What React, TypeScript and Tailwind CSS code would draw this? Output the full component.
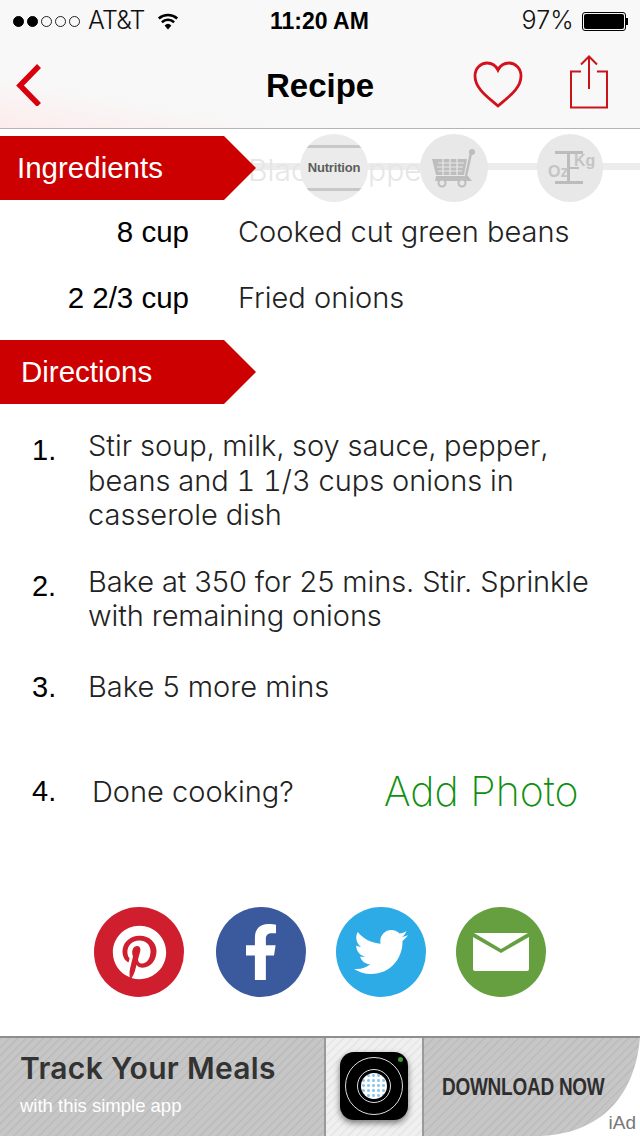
import React from 'react';
import { FaPinterest, FaFacebookF, FaTwitter } from 'react-icons/fa';

const Dot = ({ on }: { on: boolean }) => (
  <span className={on ? 'w-[11px] h-[11px] rounded-full bg-black border border-black' : 'w-[11px] h-[11px] rounded-full border border-[#222]'} />
);

const StatusBar = () => (
  <div className="h-[42px] flex items-center justify-between pl-[13px] pr-[12px] relative">
    <div className="flex items-center">
      <div className="flex gap-[3px] mr-[8px]">
        <Dot on /><Dot on /><Dot on={false} /><Dot on={false} /><Dot on={false} />
      </div>
      <span className="text-[25px] font-light text-[#111] tracking-[-0.8px]">AT&amp;T</span>
      <svg width="24" height="18" viewBox="0 0 24 18" className="ml-[11px]">
        <path d="M12 17.5 8.6 13.4a5 5 0 0 1 6.8 0Z" fill="#000" />
        <path d="M5.9 10.2a9 9 0 0 1 12.2 0M2.8 6.4a14 14 0 0 1 18.4 0" stroke="#000" strokeWidth="2.6" fill="none" />
      </svg>
    </div>
    <span className="absolute left-[270px] text-[23px] font-semibold text-black font-['Liberation_Sans',Arial,sans-serif]">11:20 AM</span>
    <div className="flex items-center">
      <span className="text-[25px] font-light text-[#111] mr-[8px] tracking-[0.2px]">97%</span>
      <div className="w-[44px] h-[19px] rounded-[3px] border border-black p-[1px]">
        <div className="w-full h-full rounded-[2px] bg-black" />
      </div>
      <div className="w-[2px] h-[7px] bg-black" />
    </div>
  </div>
);

const NavBar = () => (
  <div className="h-[86px] flex items-center justify-between pl-[14px] pr-[31px] relative">
    <svg width="30" height="42" viewBox="0 0 30 42">
      <path d="M25 2 6 21.500 25 41" stroke="#d9000d" strokeWidth="5.500" fill="none" />
    </svg>
    <span className="absolute left-[266px] text-[33px] font-semibold text-black leading-none font-['Liberation_Sans',Arial,sans-serif]">Recipe</span>
    <div className="flex items-center gap-[46px]">
      <svg width="50" height="48" viewBox="0 0 50 48">
        <path d="M25 45C16 37 2 28 2 15 2 7 8 2 14 2c5 0 9 3 11 7 2-4 6-7 11-7 6 0 12 5 12 13 0 13-14 22-23 30Z" stroke="#d2111c" strokeWidth="2.8" fill="none" />
      </svg>
      <svg width="40" height="54" viewBox="0 0 40 54" className="mt-[-6px]">
        <path d="M12 16.500H2V52.500H38V16.500H28M20 34V2M12 9.500 20 1.500 28 9.500" stroke="#c9141c" strokeWidth="2" fill="none" />
      </svg>
    </div>
  </div>
);

const Ribbon = ({ label, pad }: { label: string; pad: string }) => (
  <div className={`w-[256px] h-[64px] bg-[#cc0000] flex items-center text-white text-[29.500px] font-['Liberation_Sans',Arial,sans-serif] [clip-path:polygon(0_0,224px_0,100%_50%,224px_100%,0_100%)] ${pad}`}>
    {label}
  </div>
);

const ToolIcons = () => (
  <div className="absolute left-[200px] right-0 top-[132px] h-[72px]">
    <div className="absolute left-0 right-0 top-[31px] h-[7px] bg-[#ececec]" />
    <span className="absolute left-[48px] top-[16px] text-[30px] font-light text-[#e6e6e6] whitespace-nowrap">Black Pepper</span>
    <div className="absolute left-[100px] top-[2px] w-[68px] h-[68px] rounded-full bg-[#ebebeb] overflow-hidden flex items-center justify-center">
      <div className="absolute top-[11px] left-0 right-0 h-[3px] bg-[#c8c8c8]" />
      <div className="absolute bottom-[11px] left-0 right-0 h-[3px] bg-[#c8c8c8]" />
      <span className="text-[13px] font-bold text-[#5c5c5c] tracking-[-0.2px] relative font-['Liberation_Sans',Arial,sans-serif]">Nutrition</span>
    </div>
    <div className="absolute left-[220px] top-[2px] w-[68px] h-[68px] rounded-full bg-[#e8e8e8] flex items-center justify-center">
      <svg width="48" height="40" viewBox="0 0 48 40">
        <path d="M2 11H37L34 27H6Z" fill="#bdbdbd" />
        <path d="M8 15H34M7 19H33M8 23H32M13 11V27M20 11V27M27 11V27" stroke="#e8e8e8" strokeWidth="1.200" />
        <path d="M36 28 41 5" stroke="#bdbdbd" strokeWidth="2.500" />
        <circle cx="42" cy="4" r="3" fill="#bdbdbd" />
        <path d="M6 28H38L42 33H5Z" fill="#bdbdbd" />
        <circle cx="12" cy="35" r="3.500" fill="#e8e8e8" stroke="#bdbdbd" strokeWidth="2" />
        <circle cx="32" cy="35" r="3.500" fill="#e8e8e8" stroke="#bdbdbd" strokeWidth="2" />
      </svg>
    </div>
    <div className="absolute left-[337px] top-[2px] w-[66px] h-[68px] rounded-full bg-[#e8e8e8]">
      <div className="absolute left-[18px] top-[17px] w-[28px] h-[3px] bg-[#bcbcbc]" />
      <div className="absolute left-[30px] top-[17px] w-[3px] h-[33px] bg-[#bcbcbc]" />
      <div className="absolute left-[18px] top-[47px] w-[28px] h-[3px] bg-[#bcbcbc]" />
      <div className="absolute left-[32px] top-[33px] w-[10px] h-[2px] bg-[#bcbcbc]" />
      <span className="absolute left-[11px] top-[29px] text-[16px] leading-[18px] font-bold text-[#c4c4c4] font-['Liberation_Sans',Arial,sans-serif]">Oz</span>
      <span className="absolute left-[37px] top-[18px] text-[16px] leading-[18px] font-bold text-[#c4c4c4] font-['Liberation_Sans',Arial,sans-serif]">Kg</span>
    </div>
  </div>
);

const Ingredient = ({ qty, name, cls }: { qty: string; name: string; cls: string }) => (
  <div className={`flex items-center text-[29px] leading-[34px] font-light ${cls}`}>
    <span className="w-[189px] text-right text-black text-[29.500px] font-normal font-['Liberation_Sans',Arial,sans-serif]">{qty}</span>
    <span className="ml-[49px] text-[#222]">{name}</span>
  </div>
);

const Step = ({ n, lines, cls, numCls }: { n: string; lines: string[]; cls: string; numCls: string }) => (
  <div className={`flex ${cls}`}>
    <span className={`w-[56px] text-[29px] leading-[34px] text-black font-['Liberation_Sans',Arial,sans-serif] ${numCls}`}>{n}</span>
    <div className="text-[29px] leading-[34.500px] text-[#222] font-light">
      {lines.map((l) => (
        <div key={l}>{l}</div>
      ))}
    </div>
  </div>
);

const Social = ({ cls, children }: { cls: string; children: React.ReactNode }) => (
  <div className={`w-[90px] h-[90px] rounded-full flex items-center justify-center text-white ${cls}`}>{children}</div>
);

const SocialRow = () => (
  <div className="flex justify-start pl-[94px] mt-[88px]">
    <Social cls="bg-[#cf1f2e]"><FaPinterest size={55} /></Social>
    <Social cls="bg-[#3b5a9d] ml-[32px]"><FaFacebookF size={56} /></Social>
    <Social cls="bg-[#2dabe6] ml-[30px]"><FaTwitter size={54} /></Social>
    <Social cls="bg-[#659f40] ml-[30px]">
      <svg width="56" height="38" viewBox="0 0 56 38">
        <path d="M1 0H55L28 16Z" fill="#fff" />
        <path d="M0 4 28 20 56 4V36a2 2 0 0 1-2 2H2a2 2 0 0 1-2-2Z" fill="#fff" />
      </svg>
    </Social>
  </div>
);

const stripes = 'bg-[repeating-linear-gradient(135deg,#bcbcbc_0px,#bcbcbc_1px,#c6c6c6_2px,#c6c6c6_6px)]';

const AdBar = () => (
  <div className={`absolute left-0 right-0 bottom-0 h-[100px] border-t-2 border-[#8e8e8e] flex font-['Liberation_Sans',Arial,sans-serif] ${stripes}`}>
    <div className="w-[324px] shrink-0 pl-[20px] pt-[12px]">
      <div className="text-[30px] font-semibold text-[#333] tracking-[0.3px] leading-[36px] font-['Inter',sans-serif]">Track Your Meals</div>
      <div className="text-[18.500px] text-white mt-[9px] leading-[22px]">with this simple app</div>
    </div>
    <div className="w-[100px] border-x-2 border-[#9a9a9a] bg-[repeating-linear-gradient(135deg,#e6e6e6_0px,#e6e6e6_1px,#f0f0f0_2px,#f0f0f0_6px)] flex justify-center pt-[14px] shrink-0">
      <div className="w-[68px] h-[68px] rounded-[14px] bg-black flex items-center justify-center relative shadow-[0_3px_6px_rgba(0,0,0,0.5)]">
        <div className="w-[58px] h-[58px] rounded-full border border-[#ddd] flex items-center justify-center">
          <div className="w-[34px] h-[34px] rounded-full border border-[#ddd] flex items-center justify-center">
            <div className="w-[26px] h-[26px] rounded-full bg-[radial-gradient(circle,#8fc7ea_1px,#ffffff_2px)] bg-[length:5px_5px]" />
          </div>
        </div>
        <div className="absolute right-[5px] top-[5px] w-[5px] h-[5px] rounded-full bg-[#3a9a2a]" />
      </div>
    </div>
    <div className="flex-1 pl-[18px] pt-[33px]">
      <span className="text-[24px] font-bold text-[#2e2e2e] tracking-[-0.3px] leading-[32px] inline-block [transform:scaleX(0.79)] origin-left whitespace-nowrap">DOWNLOAD NOW</span>
    </div>
    <svg width="100" height="100" viewBox="0 0 100 100" className="absolute right-0 bottom-0">
      <path d="M100 0C96 60 60 98 0 100H100Z" fill="#fff" />
    </svg>
    <span className="absolute right-[4px] bottom-[2px] text-[19px] text-[#777] leading-[22px]">iAd</span>
  </div>
);

export default function App() {
  return (
    <div className="w-[640px] h-[1136px] relative overflow-hidden bg-white font-['Inter','Liberation_Sans',sans-serif]">
      <div className="h-[129px] border-b border-[#b5b5b5] bg-[linear-gradient(190deg,#f8f8f8_78%,#fdecec_100%)]">
        <StatusBar />
        <NavBar />
      </div>
      <ToolIcons />
      <div className="relative pt-[7px]">
        <Ribbon label="Ingredients" pad="pl-[17px]" />
        <Ingredient qty="8 cup" name="Cooked cut green beans" cls="mt-[15px]" />
        <Ingredient qty="2 2/3 cup" name="Fried onions" cls="mt-[32px]" />
        <div className="mt-[25px]"><Ribbon label="Directions" pad="pl-[21px]" /></div>
        <div className="pl-[32px]">
          <Step n="1." numCls="pt-[4px]" lines={['Stir soup, milk, soy sauce, pepper,', 'beans and 1 1/3 cups onions in', 'casserole dish']} cls="mt-[25px] tabular-nums" />
          <Step n="2." numCls="pt-[4px]" lines={['Bake at 350 for 25 mins. Stir. Sprinkle', 'with remaining onions']} cls="mt-[32px] tracking-[-0.1px]" />
          <Step n="3." numCls="pt-0" lines={['Bake 5 more mins']} cls="mt-[36px]" />
          <div className="flex items-center mt-[61px] h-[54px]">
            <span className="w-[60px] text-[29px] text-black font-['Liberation_Sans',Arial,sans-serif]">4.</span>
            <span className="text-[29px] text-[#222] font-light">Done cooking?</span>
            <span className="ml-[90px] text-[41px] text-[#0f8f0f] font-extralight">Add Photo</span>
          </div>
        </div>
        <SocialRow />
      </div>
      <AdBar />
    </div>
  );
}
